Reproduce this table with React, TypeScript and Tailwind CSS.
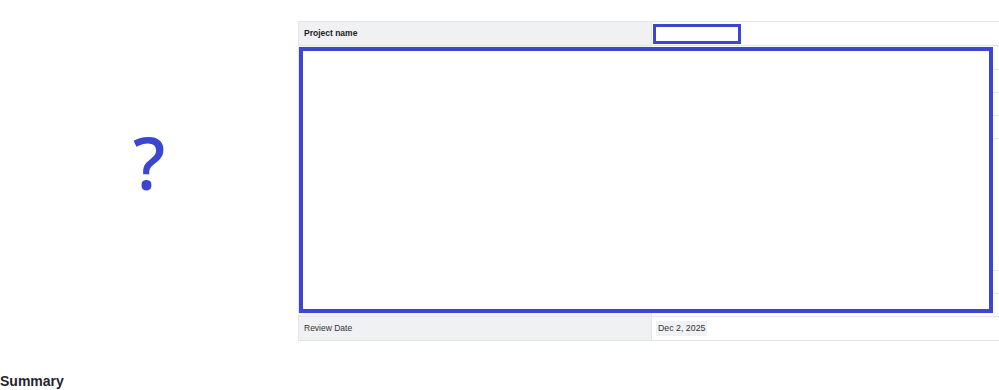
const rows: { label: string; value?: string; h: string; bold?: boolean; chip?: boolean }[] = [
  { label: "Project name", h: "h-[24px]", bold: true },
  { label: "Client", h: "h-[24px]" },
  { label: "Owner", h: "h-[23px]" },
  { label: "Status", h: "h-[23px]" },
  { label: "Budget", h: "h-[23px]" },
  { label: "Description", h: "h-[132px]" },
  { label: "Start Date", h: "h-[23px]" },
  { label: "End Date", h: "h-[23px]" },
  { label: "Review Date", value: "Dec 2, 2025", h: "h-[24px]", chip: true },
];

export default function App() {
  return (
    <div className="relative w-[999px] h-[390px] overflow-hidden bg-white font-['Liberation_Sans',Arial,sans-serif] text-[#222]">
      <div className="flex pt-[21px]">
        <div className="w-[298px] shrink-0 flex justify-center pt-[105px]">
          <span className="font-['Noto_Sans',sans-serif] font-medium text-[72px] leading-none text-[#3a45d0]">?</span>
        </div>
        <div className="w-[720px] shrink-0 border-t border-[#e4e5e8]">
          {rows.map((r) => (
            <div key={r.label} className={`flex border-b border-[#e4e5e8] ${r.h}`}>
              <div className="w-[354px] bg-[#f0f1f3] border-l border-r border-[#e4e5e8] flex items-center pl-[5px]">
                <span className={`text-[8.5px] ${r.bold ? "font-bold text-[#222]" : "text-[#333]"}`}>
                  {r.label}
                </span>
              </div>
              <div className="flex-1 flex items-center pl-[4px]">
                {r.value && (
                  <span className="bg-[#f0f1f3] px-[2px] py-[1px] text-[8.8px] text-[#333]">{r.value}</span>
                )}
              </div>
            </div>
          ))}
        </div>
      </div>

      <h2 className="mt-[33px] text-[14px] font-bold text-[#1f2430] leading-none">Summary</h2>

      <div className="absolute left-[653px] top-[24px] w-[88px] h-[20px] border-[3px] border-[#3c46d2] bg-white" />
      <div className="absolute left-[299px] top-[47px] w-[694px] h-[266px] border-[4px] border-[#3c46d2] bg-white" />
    </div>
  );
}
